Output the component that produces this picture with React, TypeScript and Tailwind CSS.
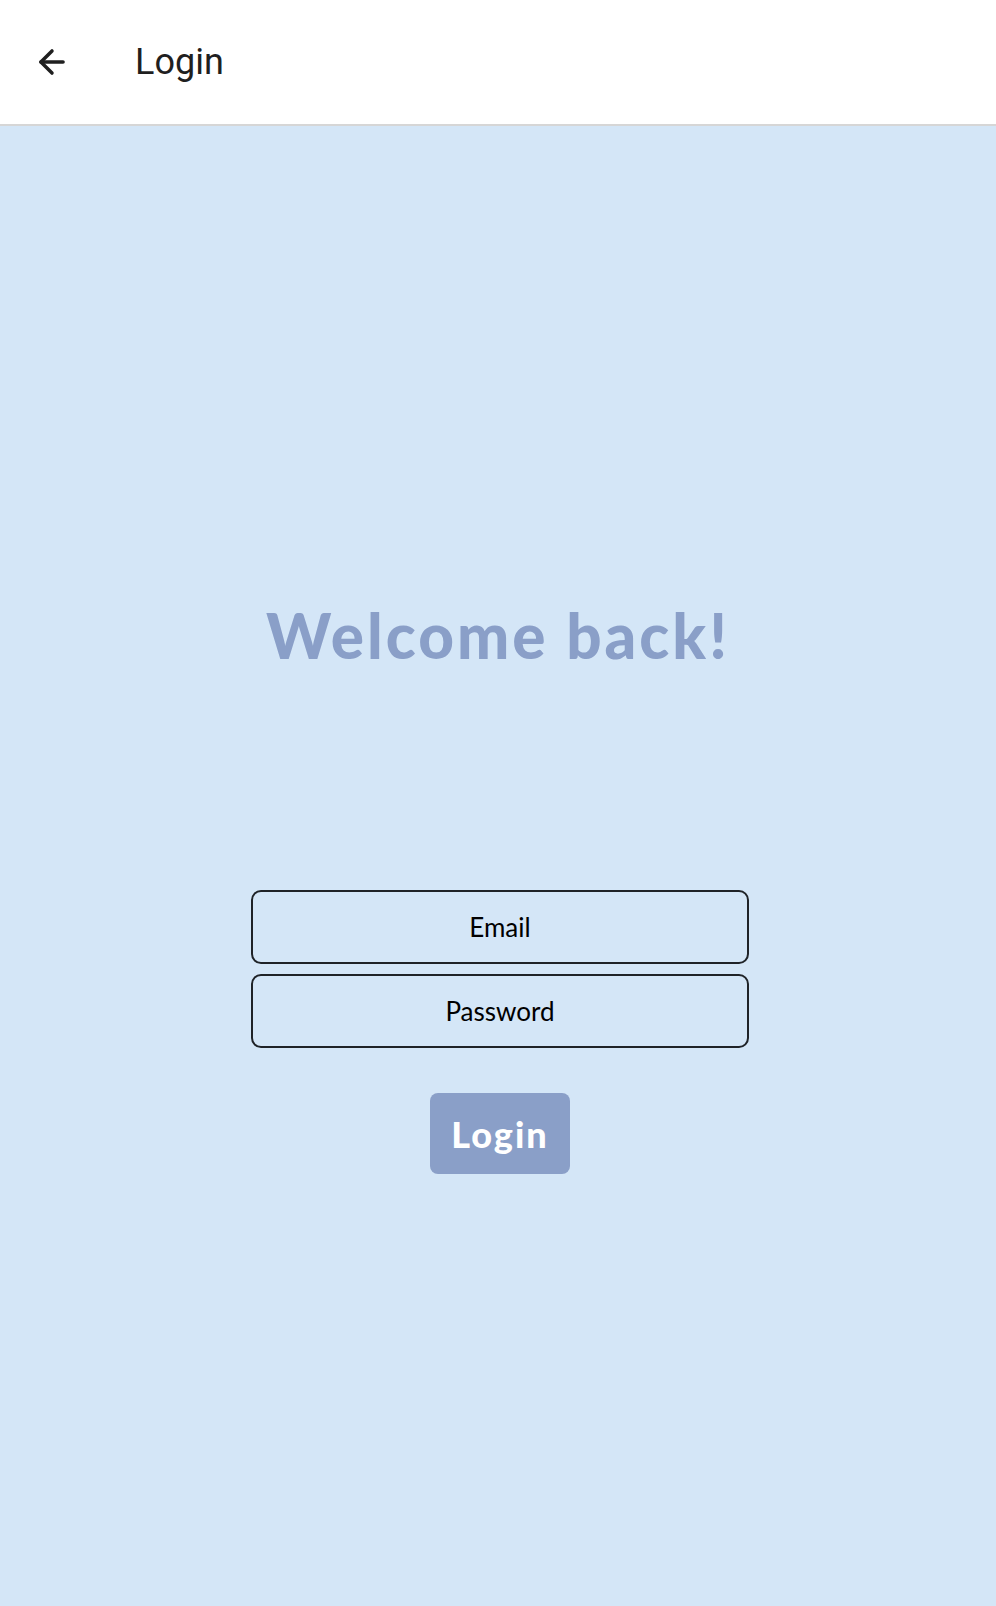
import React from 'react';
import { ArrowLeft } from 'lucide-react';

export default function App() {
  return (
    <div className="min-h-screen flex flex-col bg-[#d4e6f7]" style={{ height: 1606 }}>
      {/* Header */}
      <header className="h-[126px] bg-white flex items-center border-b-2 border-[#d6d6d6] shrink-0">
        <button className="ml-[33px] w-[38px] h-[38px] flex items-center justify-center text-[#1f1f1f]">
          <ArrowLeft size={38} strokeWidth={2.2} />
        </button>
        <h1 className="ml-[64px] text-[36px] text-[#1f1f1f] font-['Roboto',sans-serif] leading-none">Login</h1>
      </header>

      {/* Content */}
      <main className="flex-1 flex flex-col items-center font-['Lato','Noto_Sans',sans-serif]">
        <h2 className="mt-[478px] text-[62px] font-black text-[#8a9fc8] leading-none tracking-[3px]">Welcome back!</h2>

        <form className="mt-[224px] ml-[4px] flex flex-col items-center gap-[10px]">
          <input
            type="email"
            placeholder="Email"
            className="w-[498px] h-[74px] rounded-[10px] border-2 border-[#1f2328] bg-transparent text-center text-[26px] text-black placeholder:text-black outline-none"
          />
          <input
            type="password"
            placeholder="Password"
            className="w-[498px] h-[74px] rounded-[10px] border-2 border-[#1f2328] bg-transparent text-center text-[26px] text-black placeholder:text-black outline-none"
          />
          <button
            type="button"
            className="mt-[35px] w-[140px] h-[81px] rounded-[8px] bg-[#8a9fc8] text-white text-[36px] font-black tracking-[2px]"
          >
            Login
          </button>
        </form>
      </main>
    </div>
  );
}
